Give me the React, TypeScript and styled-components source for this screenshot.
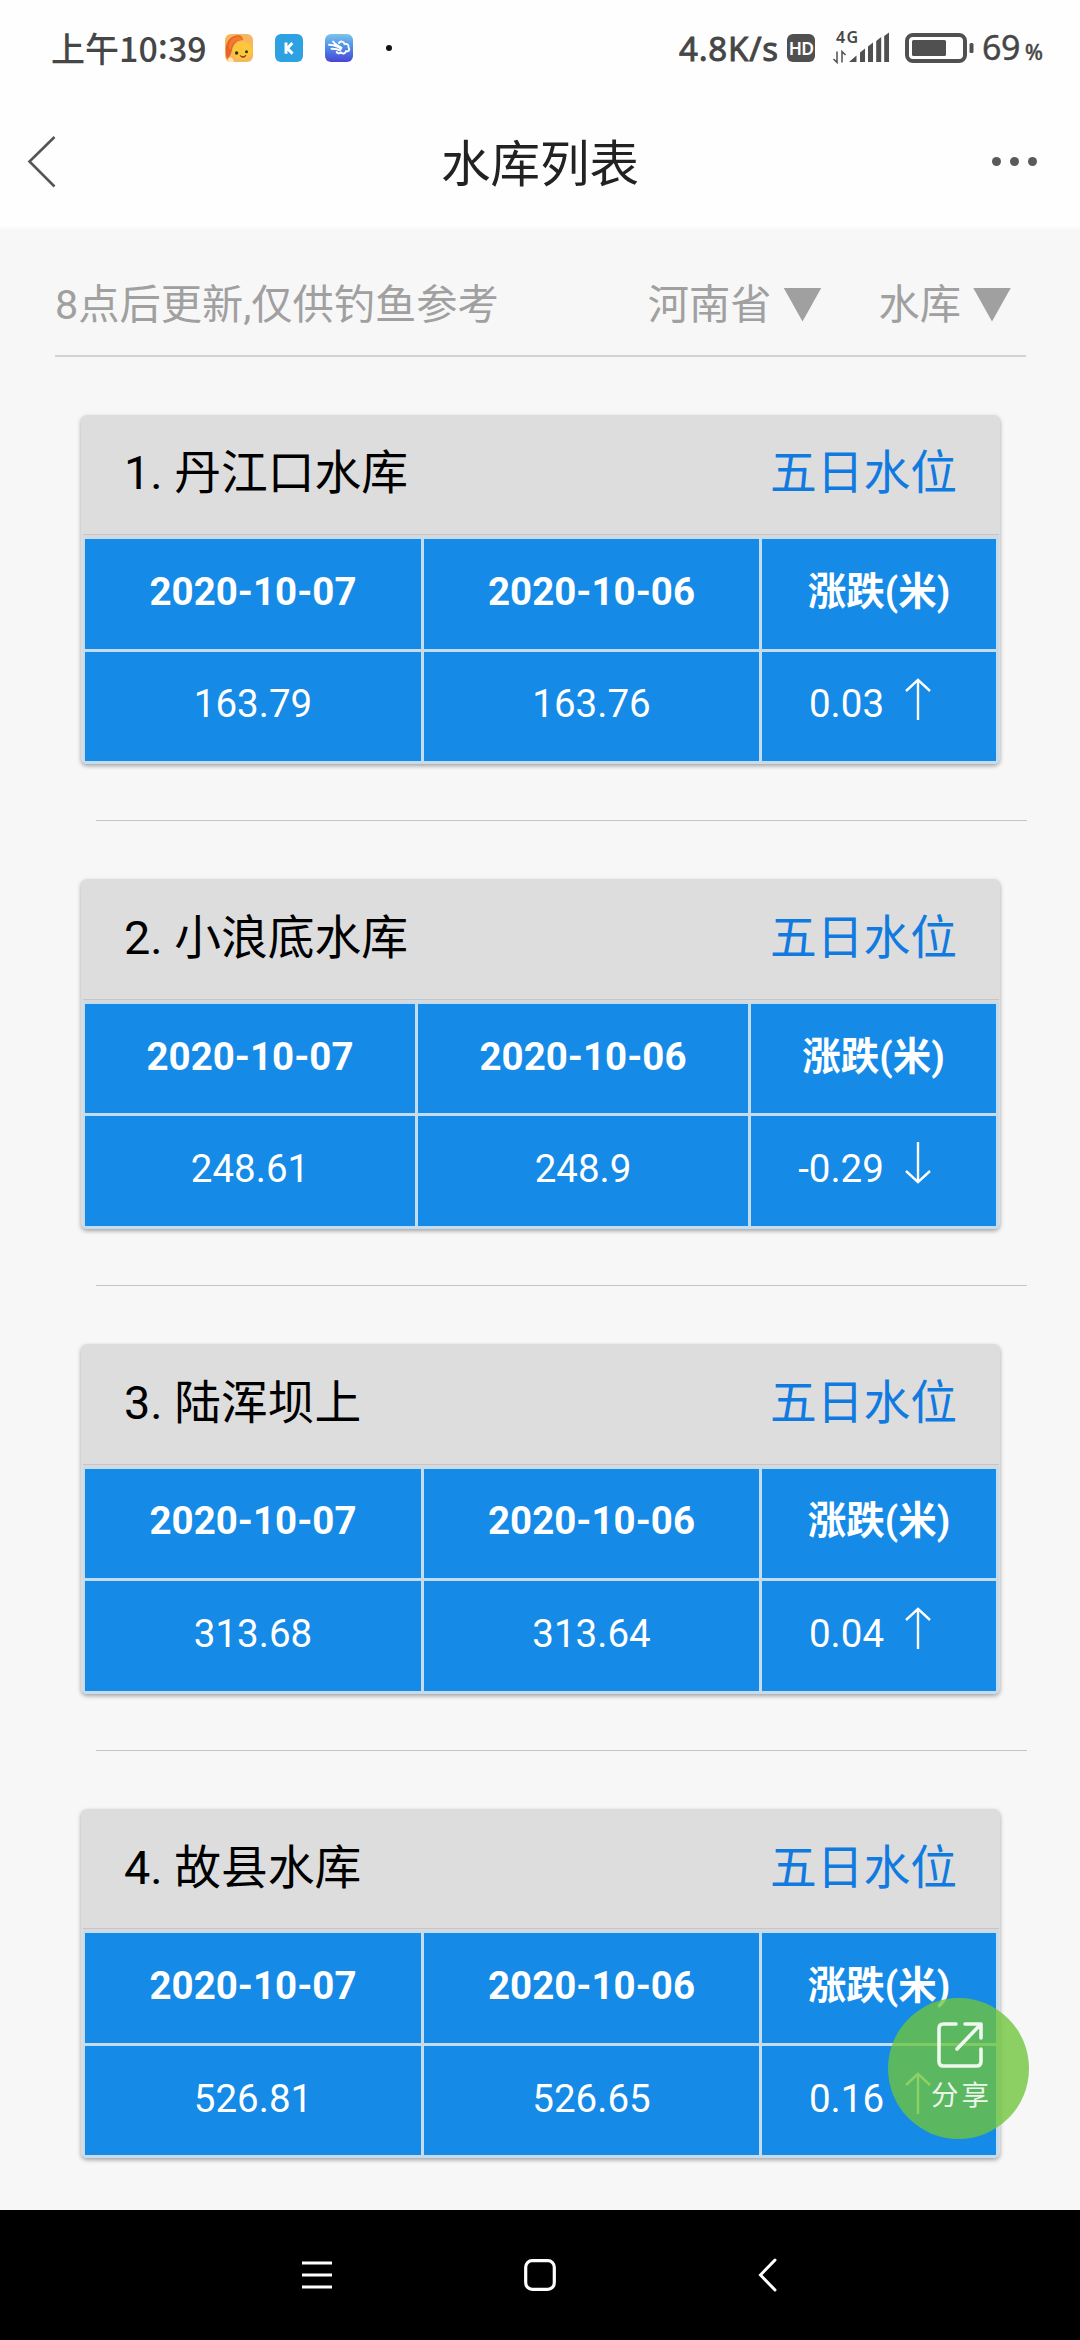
import React from 'react';
import styled, { createGlobalStyle } from 'styled-components';

const GlobalStyle = createGlobalStyle`
  * { box-sizing: border-box; }
  html, body { margin: 0; padding: 0; background: #f7f7f7; }
  body { font-family: Roboto, "Noto Sans CJK SC", sans-serif; width: 1080px; overflow: hidden; }
`;

const Screen = styled.div`
  width: 1080px;
  height: 2340px;
  display: flex;
  flex-direction: column;
  background: #f7f7f7;
  overflow: hidden;
  position: relative;
`;

const StatusBar = styled.div`
  height: 96px;
  flex: none;
  background: #fefefe;
  display: flex;
  align-items: center;
  justify-content: space-between;
  padding: 0 34px 0 51px;
  color: #464646;
  font-family: "Noto Sans CJK SC", sans-serif;
`;

const StatusGroup = styled.div`
  display: flex;
  align-items: center;
  height: 40px;
`;

const Clock = styled.span`
  font-size: 34px;
  font-weight: 500;
  line-height: 40px;
  width: 174px;
  white-space: nowrap;
`;

const Colon = styled.span`
  position: relative;
  top: -3px;
`;

const AppIcons = styled.div`
  display: flex;
  align-items: center;
  gap: 22px;
`;

const Dot = styled.i<{ $size: number; $color: string }>`
  display: block;
  width: ${(p) => p.$size}px;
  height: ${(p) => p.$size}px;
  border-radius: 50%;
  background: ${(p) => p.$color};
`;

const OverflowDot = styled(Dot)`
  margin-left: 33px;
`;

const Speed = styled.span`
  font-family: "Noto Sans", sans-serif;
  font-size: 33px;
  -webkit-text-stroke: 0.9px #464646;
  line-height: 40px;
  letter-spacing: 0.8px;
  width: 108px;
  padding-top: 1px;
  white-space: nowrap;
`;

const HdBadge = styled.span`
  width: 28px;
  height: 28px;
  border-radius: 6px;
  background: #505050;
  color: #fff;
  font: 600 17.5px/29px "Noto Sans", sans-serif;
  letter-spacing: -0.8px;
  text-align: center;
  margin-right: 17px;
`;

const Signal = styled.svg`
  display: block;
  margin-right: 16px;
`;

const Percent = styled.span`
  display: flex;
  align-items: baseline;
  font-family: "Noto Sans", sans-serif;
  font-size: 34px;
  -webkit-text-stroke: 0.4px #464646;
  line-height: 40px;
  width: 64px;
  padding-top: 2px;
  margin-left: 8px;
  letter-spacing: -0.5px;
`;

const PercentSign = styled.small`
  font-size: 21px;
  font-weight: 500;
  margin-left: 5px;
`;

const TitleBar = styled.header`
  height: 134px;
  flex: none;
  display: grid;
  grid-template-columns: 120px 1fr 120px;
  align-items: center;
  background: linear-gradient(#fefefe 130px, #f7f7f7 134px);
  padding-bottom: 3px;
  color: #222;
`;

const BackIcon = styled.svg`
  display: block;
  margin-left: 26px;
`;

const Title = styled.h1`
  margin: 0;
  padding-top: 7px;
  text-align: center;
  font-size: 49.5px;
  line-height: 70px;
  font-weight: 400;
`;

const More = styled.div`
  display: flex;
  gap: 9px;
  margin-left: 31.5px;
`;

const Content = styled.main`
  flex: 1;
  min-height: 0;
  overflow: hidden;
  padding-left: 55px;
  padding-right: 54px;
`;

const FilterRow = styled.div`
  display: flex;
  align-items: center;
  height: 127px;
  padding-top: 24px;
  border-bottom: 2px solid #d2d2d2;
  color: #a0a0a0;
  font-size: 41.25px;
  line-height: 60px;
  white-space: nowrap;
`;

const Note = styled.span`
  flex: 1;
`;

const Select = styled.span<{ $right: number }>`
  display: flex;
  align-items: center;
  gap: 12px;
  margin-right: ${(p) => p.$right}px;
`;

const Caret = styled.i`
  width: 38px;
  height: 34px;
  background: #a0a0a0;
  clip-path: polygon(0 0, 100% 0, 50% 100%);
`;

const List = styled.ol`
  list-style: none;
  margin: 0;
  padding: 57.5px 0 0;
`;

const Item = styled.li`
  height: 464.75px;
`;

const Card = styled.section`
  width: 919px;
  height: 349.5px;
  margin-left: 26px;
  border-radius: 6px;
  background: #dddddd;
  box-shadow: 0 2px 4px rgba(0, 0, 0, 0.34);
  display: flex;
  flex-direction: column;
  overflow: hidden;
`;

const CardHead = styled.div`
  height: 119.5px;
  display: flex;
  justify-content: space-between;
  align-items: center;
  padding: 0 43px 2px 43px;
  font-size: 46.75px;
  line-height: 68px;
  color: #000;
`;

const LevelLink = styled.a`
  color: #107ae0;
`;

const Table = styled.div<{ $cols: string }>`
  flex: 1;
  display: grid;
  grid-template-columns: ${(p) => p.$cols};
  grid-template-rows: 109.5px 109.5px;
  gap: 3px;
  margin: 0 1px 0 2px;
  padding: 4px 3px 3px 2px;
  border-top: 1px solid #c8c5c5;
  background: linear-gradient(#dad8d8 2px, #c3dcf0 2px);
`;

const Cell = styled.div<{ $bold?: boolean }>`
  display: flex;
  align-items: center;
  justify-content: center;
  background: #158ae6;
  color: #fff;
  font-size: 38.5px;
  line-height: 56px;
  font-weight: ${(p) => (p.$bold ? 700 : 400)};
  padding-bottom: 4px;
  white-space: nowrap;
`;

const Arrow = styled.svg<{ $down: boolean }>`
  display: block;
  margin: 0 17px ${(p) => (p.$down ? 12 : 11)}px 20px;
  transform: ${(p) => (p.$down ? 'rotate(180deg)' : 'none')};
`;

const Divider = styled.hr`
  border: 0;
  height: 1px;
  background: #c4c4c4;
  margin: 56px -1px 0 41px;
`;

const ShareButton = styled.button`
  position: absolute;
  left: 888px;
  top: 1998px;
  width: 141px;
  height: 141px;
  border: 0;
  border-radius: 50%;
  padding: 20px 0 0;
  background: rgba(111, 197, 59, 0.79);
  color: rgba(255, 255, 255, 0.9);
  display: flex;
  flex-direction: column;
  align-items: center;
  justify-content: flex-start;
  gap: 8px;
  font: 400 27.5px/40px Roboto, "Noto Sans CJK SC", sans-serif;
`;

const ShareLabel = styled.span`
  letter-spacing: 3px;
  margin-left: 6px;
`;

const NavBar = styled.nav`
  height: 130px;
  flex: none;
  background: #000;
  display: flex;
  align-items: center;
  padding-left: 302px;
`;

const NavIcon = styled.svg<{ $left?: number }>`
  display: block;
  margin-left: ${(p) => p.$left ?? 0}px;
`;

interface Reservoir {
  name: string;
  today: string;
  yesterday: string;
  change: string;
}

const reservoirs: Reservoir[] = [
  { name: '丹江口水库', today: '163.79', yesterday: '163.76', change: '0.03' },
  { name: '小浪底水库', today: '248.61', yesterday: '248.9', change: '-0.29' },
  { name: '陆浑坝上', today: '313.68', yesterday: '313.64', change: '0.04' },
  { name: '故县水库', today: '526.81', yesterday: '526.65', change: '0.16' },
];

function LionIcon() {
  return (
    <svg width="28" height="28" viewBox="0 0 28 28">
      <rect width="28" height="28" rx="6" fill="#f6b55e" />
      <path d="M2 25C-1 15 1 5 9 2c5-2 9 0 9 4-6 0-10 4-11 10-1 4-2 7-5 9z" fill="#e8622a" />
      <ellipse cx="17.500" cy="16.500" rx="10" ry="9" fill="#fdc73c" />
      <path d="M6 15c1-6 5-9 11-9 0-2-2-4-6-3-5 1-8 6-7 12z" fill="#f07d2c" />
      <circle cx="11.600" cy="19" r="1.700" fill="#3a3010" />
      <circle cx="21.500" cy="17.800" r="1.500" fill="#3a3010" />
      <path d="M15 21.500c2 1.500 4 1.500 6-.3-1 2.800-4 3-6 .3z" fill="#b0402a" stroke="#8a3a1a" strokeWidth="0.800" />
      <path d="M3 26c0-3 3-3 5-1l1 3H6c-2 0-3-1-3-2z" fill="#ffe9b0" />
    </svg>
  );
}

function KIcon() {
  return (
    <svg width="28" height="28" viewBox="0 0 28 28">
      <rect width="28" height="28" rx="6" fill="#2ea1e2" />
      <path d="M11 8.500v11.300M17.300 8.900l-5 5.500 5.300 5.200" fill="none" stroke="#fff" strokeWidth="2.900" />
    </svg>
  );
}

function CloudIcon() {
  return (
    <svg width="28" height="28" viewBox="0 0 28 28">
      <defs>
        <linearGradient id="cloudSky" x1="0" y1="0" x2="0" y2="1">
          <stop offset="0" stopColor="#7cc4ea" />
          <stop offset="0.450" stopColor="#4f8fe8" />
          <stop offset="1" stopColor="#4a45d6" />
        </linearGradient>
      </defs>
      <rect width="28" height="28" rx="6" fill="url(#cloudSky)" />
      <g fill="none" stroke="#fff" strokeLinecap="round" strokeLinejoin="round">
        <path strokeWidth="1.900" d="M14 9c1.500-2.500 5-1.500 5.500 1 3-.5 4.700 1 4 3.500 2 2.500-.5 4.500-2.500 3.600-.5 2.600-3.500 3.300-5 1.200-1.500 1.600-3.700 1.200-4.300-.4" />
        <path strokeWidth="1.900" d="M8 7.500c2 3.500 5 4.200 8.500 6.200M4 10.800c4 .2 8.500 1.200 12 4M6.500 14.800c3 0 6 .2 8.500 1.500" />
      </g>
    </svg>
  );
}

function SignalIcon() {
  return (
    <Signal width="57" height="52" viewBox="832 22 57 52">
      <text x="836" y="43" fontFamily="Noto Sans" fontSize="16" fontWeight="600" fill="#464646" textLength="22">4G</text>
      <path d="M837 51.500v11l-3.500-3.500M842 62.500v-11l3.500 3.500" fill="none" stroke="#505050" strokeWidth="1.500" />
      <path
        fill="#505050"
        d="M849 62l7.500-6.500V62zM860 52.500l5-4V62h-5zM868 46.500l5-4V62h-5zM876.200 41l5-4V62h-5zM884.200 36l4.800-3.500V62h-4.800z"
      />
    </Signal>
  );
}

function BatteryIcon() {
  return (
    <svg width="69" height="30" viewBox="0 0 69 30">
      <rect x="2" y="2" width="58" height="26" rx="6" fill="none" stroke="#505050" strokeWidth="4" />
      <rect x="7" y="7" width="34" height="16" rx="1.500" fill="#505050" />
      <rect x="64.500" y="10" width="4" height="10" rx="1.500" fill="#505050" />
    </svg>
  );
}

function ReservoirCard({ index, data }: { index: number; data: Reservoir }) {
  const down = data.change.startsWith('-');
  return (
    <Item>
      <Card>
        <CardHead>
          <span>{index}. {data.name}</span>
          <LevelLink>五日水位</LevelLink>
        </CardHead>
        <Table $cols={down ? '330px 330px 245px' : '336px 335px 234px'}>
          <Cell $bold>2020-10-07</Cell>
          <Cell $bold>2020-10-06</Cell>
          <Cell $bold>涨跌(米)</Cell>
          <Cell>{data.today}</Cell>
          <Cell>{data.yesterday}</Cell>
          <Cell>
            {data.change}
            <Arrow $down={down} width="28" height="42" viewBox="0 0 28 42">
              <path d="M14 42V2M2 13L14 1.800 26 13" fill="none" stroke="#fff" strokeWidth="2.400" />
            </Arrow>
          </Cell>
        </Table>
      </Card>
      <Divider />
    </Item>
  );
}

export default function App() {
  return (
    <Screen>
      <GlobalStyle />
      <StatusBar>
        <StatusGroup>
          <Clock>上午10<Colon>:</Colon>39</Clock>
          <AppIcons>
            <LionIcon />
            <KIcon />
            <CloudIcon />
          </AppIcons>
          <OverflowDot $size={6} $color="#111" />
        </StatusGroup>
        <StatusGroup>
          <Speed>4.8K/s</Speed>
          <HdBadge>HD</HdBadge>
          <SignalIcon />
          <BatteryIcon />
          <Percent>69<PercentSign>%</PercentSign></Percent>
        </StatusGroup>
      </StatusBar>
      <TitleBar>
        <BackIcon width="32" height="54" viewBox="0 0 32 54">
          <path d="M28.500 2L3.500 26.500 28.500 51.500" fill="none" stroke="#555" strokeWidth="2.600" />
        </BackIcon>
        <Title>水库列表</Title>
        <More>
          <Dot $size={9} $color="#5a5a5a" />
          <Dot $size={9} $color="#5a5a5a" />
          <Dot $size={9} $color="#5a5a5a" />
        </More>
      </TitleBar>
      <Content>
        <FilterRow>
          <Note>8点后更新,仅供钓鱼参考</Note>
          <Select $right={57}>河南省<Caret /></Select>
          <Select $right={15}>水库<Caret /></Select>
        </FilterRow>
        <List>
          {reservoirs.map((r, i) => (
            <ReservoirCard key={r.name} index={i + 1} data={r} />
          ))}
        </List>
      </Content>
      <NavBar>
        <NavIcon width="30" height="28" viewBox="0 0 30 28">
          <path d="M0 2h30M0 14h30M0 26h30" stroke="#fff" strokeWidth="3" />
        </NavIcon>
        <NavIcon $left={192} width="32" height="32" viewBox="0 0 32 32">
          <rect x="1.700" y="1.700" width="28.600" height="28.600" rx="6.500" fill="none" stroke="#fff" strokeWidth="3.200" />
        </NavIcon>
        <NavIcon $left={202} width="20" height="34" viewBox="0 0 20 34">
          <path d="M17 2L2.500 17 17 32" fill="none" stroke="#fff" strokeWidth="3" strokeLinecap="round" />
        </NavIcon>
      </NavBar>
      <ShareButton>
        <svg width="50" height="50" viewBox="0 0 50 50" fill="none" stroke="currentColor" strokeWidth="3.600" strokeLinecap="round" strokeLinejoin="round">
          <path d="M22 6H9.500Q5 6 5 10.500V43.500Q5 48 9.500 48H42.500Q47 48 47 43.500V31" />
          <path d="M31 6H47V20M46 7L23 31" />
        </svg>
        <ShareLabel>分享</ShareLabel>
      </ShareButton>
    </Screen>
  );
}
